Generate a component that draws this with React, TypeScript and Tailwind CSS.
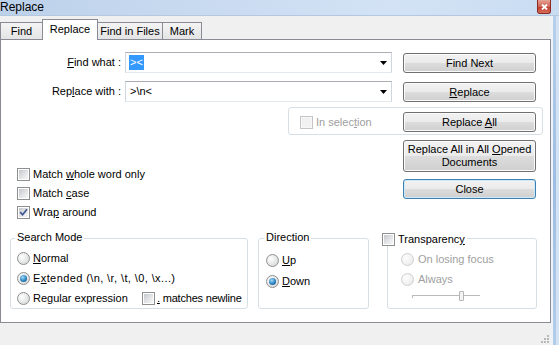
import React from "react";

function Check({ checked = false, disabled = false }: { checked?: boolean; disabled?: boolean }) {
  return (
    <span
      className={`relative block w-[13px] h-[13px] border shrink-0 ${
        disabled ? "border-[#c5c5c5] bg-[#f7f7f7]" : "border-[#8e8f8f] bg-white"
      }`}
    >
      <span
        className={`absolute left-[1px] top-[1px] w-[9px] h-[9px] ${
          disabled
            ? "bg-[#f1f1f1]"
            : "bg-[linear-gradient(135deg,#c4c7cc,#e6e7e9_60%,#f7f7f7)]"
        }`}
      />
      {checked && (
        <svg className="absolute left-[1px] top-[1px]" width="9" height="9" viewBox="0 0 9 9">
          <path d="M1.2 4.2 L3.6 6.8 L8 1.2" stroke="#3d5692" strokeWidth="1.7" fill="none" />
        </svg>
      )}
    </span>
  );
}

function Radio({ checked = false, disabled = false }: { checked?: boolean; disabled?: boolean }) {
  return (
    <span
      className={`relative block w-[13px] h-[13px] rounded-full border shrink-0 ${
        disabled
          ? "border-[#cfcfcf] bg-[radial-gradient(circle_at_35%_35%,#fdfdfd,#e8e8e8)]"
          : "border-[#8e8f8f] bg-[radial-gradient(circle_at_35%_35%,#ffffff,#d0d1d3)]"
      }`}
    >
      {checked && (
        <span className="absolute left-[2px] top-[2px] w-[7px] h-[7px] rounded-full bg-[radial-gradient(circle_at_40%_35%,#a4dcf8,#2a83c0_55%,#0c3f6a)]" />
      )}
    </span>
  );
}

function Btn({
  children,
  className = "",
  def = false,
}: {
  children: React.ReactNode;
  className?: string;
  def?: boolean;
}) {
  return (
    <div
      className={`flex items-center justify-center text-center rounded-[3px] border leading-[13px] bg-[linear-gradient(to_bottom,#f2f2f2_0%,#ebebeb_50%,#dddddd_50%,#cfcfcf_100%)] ${
        def
          ? "border-[#3c7fb1] shadow-[inset_0_0_0_1px_#cfe9f9]"
          : "border-[#707070] shadow-[inset_0_0_0_1px_#fbfbfb]"
      } ${className}`}
    >
      {children}
    </div>
  );
}

function Combo({ children }: { children: React.ReactNode }) {
  return (
    <div className="ml-[4px] w-[267px] h-[21px] flex items-center border border-t-[#abadb3] border-x-[#cfd6df] border-b-[#e3e9ef] bg-white">
      <div className="flex-1 pl-[3px] flex items-center">{children}</div>
      <svg className="mr-[4px]" width="7" height="4" viewBox="0 0 7 4">
        <path d="M0 0 H7 L3.5 4 Z" fill="#000" />
      </svg>
    </div>
  );
}

export default function App() {
  return (
    <div className="w-[559px] h-[345px] overflow-hidden bg-[#f0f0f0] font-['Liberation_Sans',Arial,sans-serif] text-[11px] leading-[13px] text-black">
      {/* Title bar */}
      <div className="relative h-[16px] bg-[linear-gradient(to_right,#bcd1ea,#c8daf0_35%,#d3e3f5_70%,#c9dcf1)] border-b border-[#b4c8e0]">
        <span className="block text-[12px] leading-[13px] pt-[1px] text-black">Replace</span>
        <div className="absolute right-[8px] top-0 w-[14px] h-[14px] rounded-b-[3px] border border-t-0 border-[#8a2a20] bg-[linear-gradient(to_bottom,#e6a196,#cf6656_50%,#c0392b_51%,#d76e5c)] flex items-center justify-center">
          <svg width="7" height="6" viewBox="0 0 7 6">
            <path d="M1 0.5 L6 5.5 M6 0.5 L1 5.5" stroke="#fff" strokeWidth="1.8" />
          </svg>
        </div>
      </div>

      <div className="flex h-[329px]">
        {/* main column */}
        <div className="w-[551px] flex flex-col">
          {/* Tabs */}
          <div className="h-[23px] flex items-end relative z-10">
            <div className="w-[43px] h-[17px] border border-b-0 border-[#898c95] bg-[linear-gradient(to_bottom,#f4f4f4,#e4e4e4)] flex items-center justify-center">
              Find
            </div>
            <div className="-ml-[1px] w-[56px] h-[21px] -mb-[1px] border border-b-0 border-[#898c95] bg-white flex items-start justify-center pt-[3px]">
              Replace
            </div>
            <div className="w-[65px] h-[17px] border border-b-0 border-l-0 border-[#898c95] bg-[linear-gradient(to_bottom,#f4f4f4,#e4e4e4)] flex items-center justify-center whitespace-nowrap">
              Find in Files
            </div>
            <div className="w-[39px] h-[17px] border border-b-0 border-l-0 border-[#898c95] bg-[linear-gradient(to_bottom,#f4f4f4,#e4e4e4)] flex items-center justify-center">
              Mark
            </div>
          </div>

          {/* Panel */}
          <div className="h-[284px] border border-[#898c95] bg-white flex flex-col">
            {/* Row 1 */}
            <div className="mt-[12px] flex items-start h-[21px]">
              <div className="w-[120px] text-right leading-[21px]">
                <span className="underline">F</span>ind what :
              </div>
              <Combo>
                <span className="bg-[#3399ff] text-white px-[1px] leading-[15px]">&gt;&lt;</span>
              </Combo>
              <Btn className="ml-[11px] mt-[1px] w-[133px] h-[20px]">Find Next</Btn>
            </div>

            {/* Row 2 */}
            <div className="mt-[8px] flex items-start h-[21px]">
              <div className="w-[120px] text-right leading-[21px]">
                Rep<span className="underline">l</span>ace with :
              </div>
              <Combo>
                <span className="pl-[1px]">&gt;\n&lt;</span>
              </Combo>
              <Btn className="ml-[11px] mt-[1px] w-[133px] h-[20px]">
                <span>
                  <span className="underline">R</span>eplace
                </span>
              </Btn>
            </div>

            {/* Row 3: In selection */}
            <div className="mt-[5px] ml-[287px] w-[255px] h-[28px] border border-[#d5dfe5] rounded-[3px] flex items-start">
              <div className="ml-[11px] mt-[8px] w-[103px] h-[13px] flex items-center gap-[3px] text-[#a0a0a0]">
                <Check disabled />
                <span>
                  In selec<span className="underline">t</span>ion
                </span>
              </div>
              <Btn className="mt-[4px] w-[133px] h-[20px]">
                <span>
                  Replace <span className="underline">A</span>ll
                </span>
              </Btn>
            </div>

            {/* Row 4 */}
            <div className="h-[87px] flex">
              <div className="w-[402px] pt-[30px] pl-[16px] flex flex-col">
                <div className="h-[19px] flex items-center gap-[3px]">
                  <Check />
                  <span>
                    Match <span className="underline">w</span>hole word only
                  </span>
                </div>
                <div className="h-[19px] flex items-center gap-[3px]">
                  <Check />
                  <span>
                    Match <span className="underline">c</span>ase
                  </span>
                </div>
                <div className="h-[19px] flex items-center gap-[3px]">
                  <Check checked />
                  <span>
                    Wra<span className="underline">p</span> around
                  </span>
                </div>
              </div>
              <div className="flex flex-col">
                <Btn className="mt-[5px] w-[133px] h-[32px]">
                  <span>
                    Replace All in All <span className="underline">O</span>pened
                    <br />
                    Documents
                  </span>
                </Btn>
                <Btn def className="mt-[7px] w-[133px] h-[20px]">
                  Close
                </Btn>
              </div>
            </div>

            {/* Row 5: group boxes */}
            <div className="mt-[16px] flex items-start">
              {/* Search Mode */}
              <div className="relative ml-[9px] w-[238px] h-[71px] border border-[#d5dfe5] rounded-[3px] pt-[9px] pl-[6px] flex flex-col">
                <span className="absolute left-[4px] -top-[8px] px-[2px] bg-white">Search Mode</span>
                <div className="h-[20px] flex items-center gap-[3px]">
                  <Radio />
                  <span>
                    <span className="underline">N</span>ormal
                  </span>
                </div>
                <div className="h-[20px] flex items-center gap-[3px] whitespace-nowrap">
                  <Radio checked />
                  <span className="tracking-[0.4px]">
                    E<span className="underline">x</span>tended (\n, \r, \t, \0, \x...)
                  </span>
                </div>
                <div className="h-[20px] flex items-center whitespace-nowrap">
                  <div className="w-[125px] flex items-center gap-[3px]">
                    <Radio />
                    <span>
                      Re<span className="underline">g</span>ular expression
                    </span>
                  </div>
                  <div className="flex items-center gap-[2px]">
                    <Check />
                    <span className="tracking-[-0.2px]">
                      <span className="underline">.</span> matches newline
                    </span>
                  </div>
                </div>
              </div>

              {/* Direction */}
              <div className="relative ml-[10px] w-[111px] h-[71px] border border-[#d5dfe5] rounded-[3px] pt-[11px] pl-[7px] flex flex-col">
                <span className="absolute left-[5px] -top-[8px] px-[2px] bg-white">Direction</span>
                <div className="h-[21px] flex items-center gap-[3px]">
                  <Radio />
                  <span>
                    <span className="underline">U</span>p
                  </span>
                </div>
                <div className="h-[21px] flex items-center gap-[3px]">
                  <Radio checked />
                  <span>
                    <span className="underline">D</span>own
                  </span>
                </div>
              </div>

              {/* Transparency */}
              <div className="relative ml-[18px] w-[150px] h-[71px] border border-[#d5dfe5] rounded-[3px] pt-[10px] pl-[13px] flex flex-col">
                <div className="absolute -left-[6px] -top-[6px] pr-[2px] bg-white flex items-center gap-[3px]">
                  <Check />
                  <span>
                    Transparenc<span className="underline">y</span>
                  </span>
                </div>
                <div className="h-[20px] flex items-center gap-[4px] text-[#a0a0a0]">
                  <Radio disabled />
                  <span>On losing focus</span>
                </div>
                <div className="h-[20px] flex items-center gap-[4px] text-[#a0a0a0]">
                  <Radio disabled />
                  <span>Always</span>
                </div>
                <div className="relative ml-[11px] mt-[2px] w-[68px] h-[10px]">
                  <div className="absolute left-0 top-[4px] w-[68px] h-[1px] bg-[#b9b9b9]" />
                  <div className="absolute left-0 top-[4px] w-[1px] h-[3px] bg-[#b9b9b9]" />
                  <div className="absolute left-[47px] top-0 w-[5px] h-[10px] rounded-[1px] border border-[#b5b5b5] bg-[#f4f4f4]" />
                </div>
              </div>
            </div>
          </div>

          {/* bottom strip */}
          <div className="flex-1 flex justify-end items-end pb-[2px] pr-[2px]">
            <svg width="10" height="10" viewBox="0 0 10 10">
              {[
                [8, 2],
                [8, 5],
                [5, 5],
                [8, 8],
                [5, 8],
                [2, 8],
              ].map(([x, y], i) => (
                <rect key={i} x={x} y={y} width="2" height="2" fill="#b8b8b8" />
              ))}
            </svg>
          </div>
        </div>

        {/* right window frame */}
        <div className="w-[8px] flex">
          <div className="w-[2px] bg-[#eef3f9]" />
          <div className="w-[3px] bg-[linear-gradient(to_bottom,#b8d0ea,#9dbde2_50%,#b3cce8)]" />
          <div className="w-[3px] bg-[#d4e3f3]" />
        </div>
      </div>
    </div>
  );
}
